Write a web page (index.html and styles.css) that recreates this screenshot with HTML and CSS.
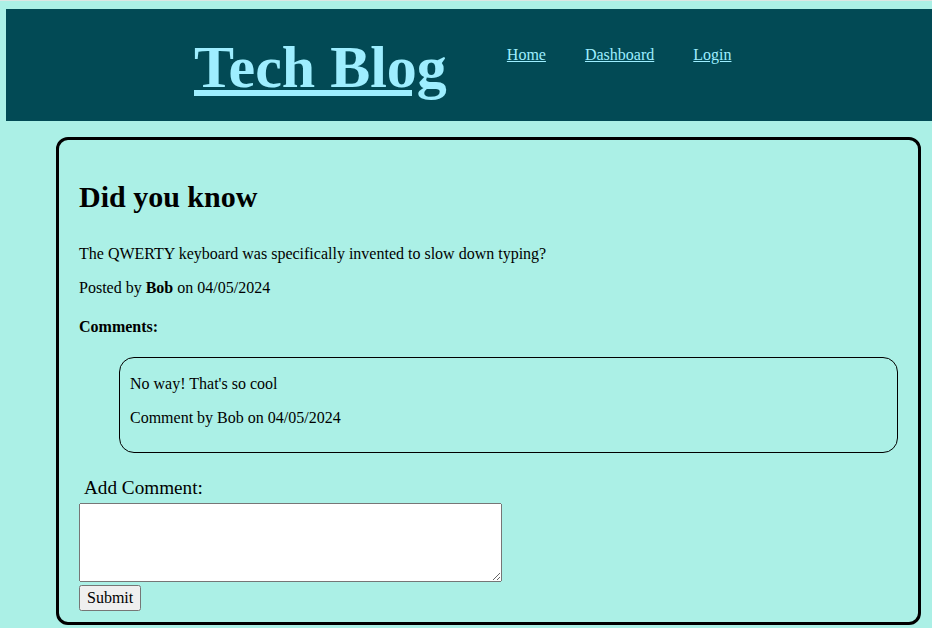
FILE: index.html
```html
<!DOCTYPE html>
<html>
<head>
<meta charset="utf-8">
<title>Tech Blog</title>
<link rel="stylesheet" href="styles.css">
</head>
<body>
<header class="site-header">
  <h1 class="brand"><a href="#">Tech Blog</a></h1>
  <nav class="nav">
    <a href="#">Home</a>
    <a href="#">Dashboard</a>
    <a href="#">Login</a>
  </nav>
</header>
<main class="card">
  <h2 class="post-title">Did you know</h2>
  <p class="post-body">The QWERTY keyboard was specifically invented to slow down typing?</p>
  <p class="post-meta">Posted by <b>Bob</b> on 04/05/2024</p>
  <h4 class="comments-title">Comments:</h4>
  <div class="comment">
    <p>No way! That's so cool</p>
    <p>Comment by Bob on 04/05/2024</p>
  </div>
  <form class="comment-form">
    <label class="comment-label" for="c">Add Comment:</label>
    <textarea id="c" class="comment-input"></textarea>
    <button type="submit" class="submit-btn">Submit</button>
  </form>
</main>
</body>
</html>
```

FILE: styles.css
```css
html {
  background: #abf0e6;
}
body {
  margin: 0;
  padding: 9px 0 5px 6px;
  font-family: "Liberation Serif", "Times New Roman", serif;
  font-size: 16px;
  color: #000;
  background: #abf0e6;
  border-top: 1px solid #dde6e4;
}
.site-header {
  display: flex;
  align-items: flex-start;
  height: 112px;
  box-sizing: border-box;
  padding-left: 188px;
  margin-top: -1px;
  background: #024a55;
}
.brand {
  margin: 24px 0 0 0;
  font-size: 60px;
  font-weight: bold;
  line-height: normal;
}
.brand a {
  color: #9eeeff;
}
.nav {
  display: flex;
  gap: 39px;
  margin: 37px 0 0 60px;
}
.nav a {
  color: #9eeeff;
  font-size: 16px;
}
.card {
  margin: 16px 11px 0 50px;
  border: 3px solid #000;
  border-radius: 12px;
  padding: 20px 20px 11px 20px;
}
.post-title {
  font-size: 30px;
  font-weight: bold;
  margin: 20px 0 31px 0;
}
.post-body,
.post-meta {
  margin: 16px 0;
}
.comments-title {
  margin: 21px 0;
  font-size: 16px;
}
.comment {
  margin: 21px 0 0 40px;
  border: 1px solid #000;
  border-radius: 15px;
  padding: 1px 10px 9px 10px;
}
.comment p {
  margin: 16px 0;
}
.comment-form {
  margin-top: 24px;
}
.comment-label {
  display: block;
  font-size: 19.2px;
  padding-left: 5px;
  margin-bottom: 4px;
}
.comment-input {
  display: block;
  width: 423px;
  height: 79px;
  box-sizing: border-box;
  margin: 0;
}
.submit-btn {
  margin-top: 3px;
  font-family: "Liberation Serif", "Times New Roman", serif;
  font-size: 16px;
  padding: 2px 6px;
}
```
